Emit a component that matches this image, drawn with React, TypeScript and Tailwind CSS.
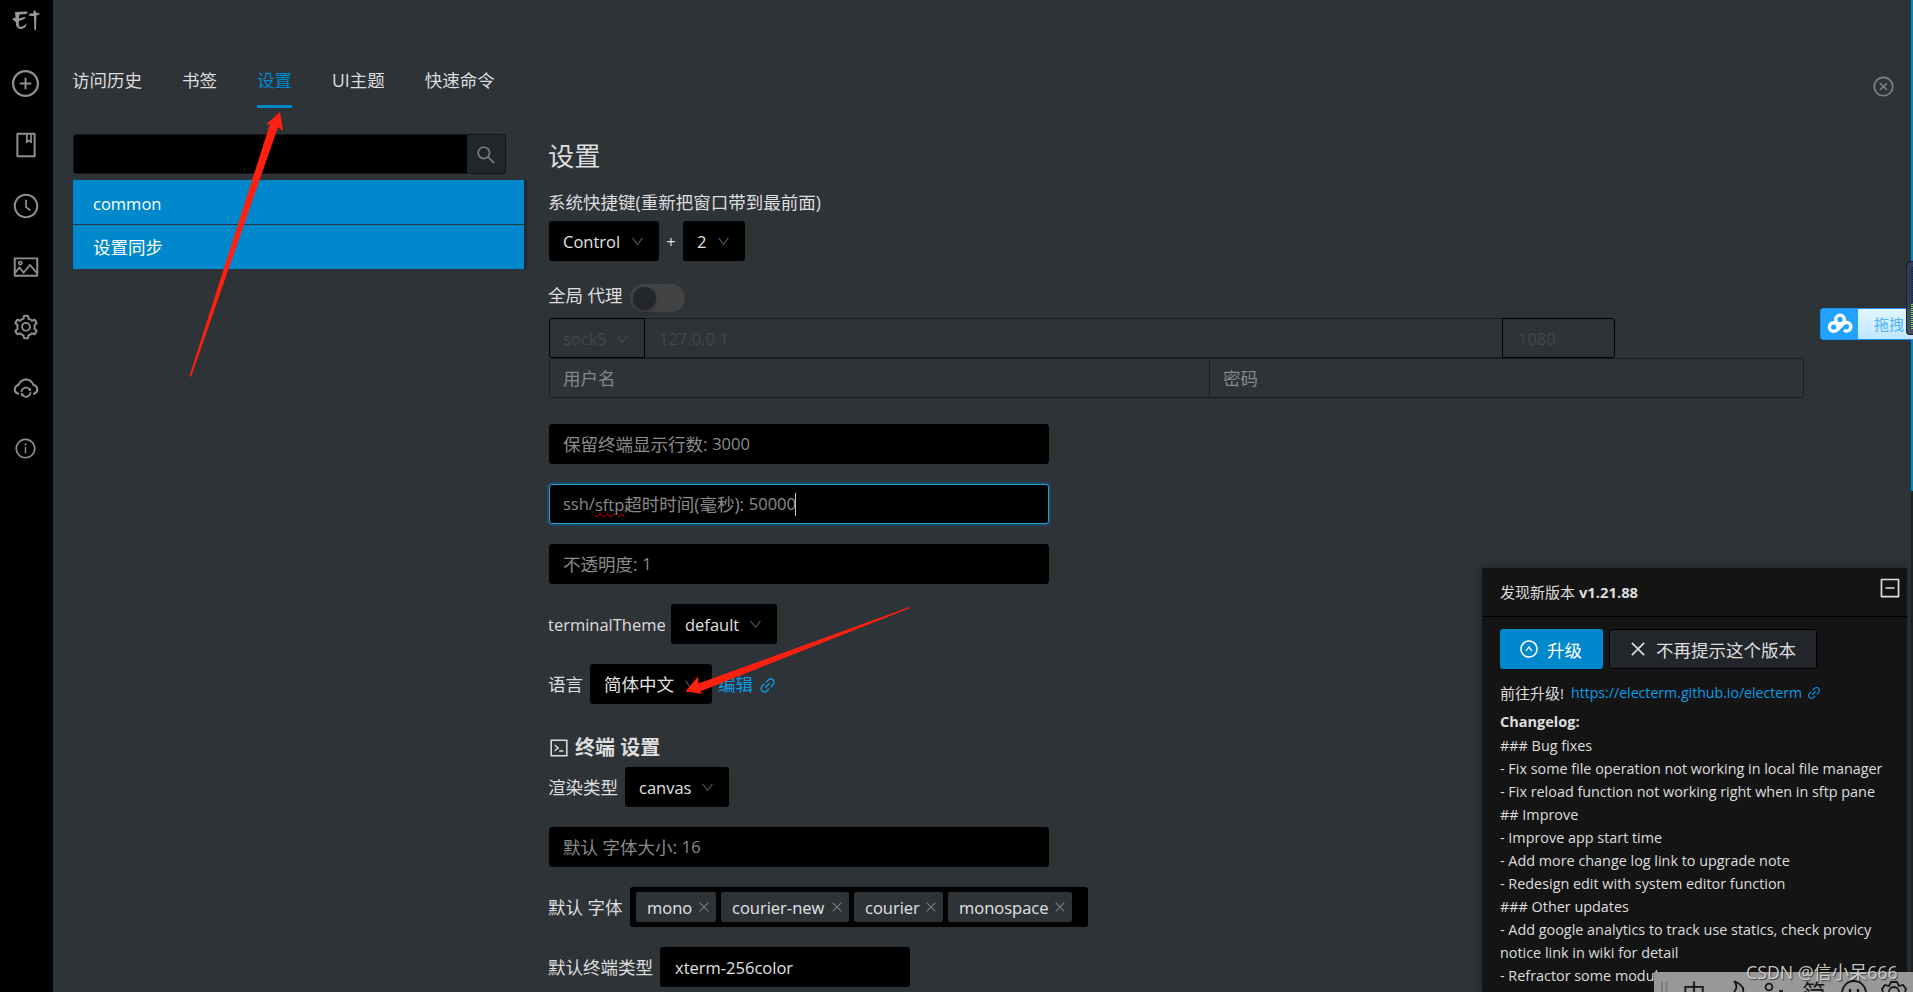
import type { ReactNode } from 'react'
import {
  AiOutlineBook,
  AiOutlineClockCircle,
  AiOutlineClose,
  AiOutlineCloseCircle,
  AiOutlineCloudSync,
  AiOutlineCode,
  AiOutlineDown,
  AiOutlineInfoCircle,
  AiOutlineLink,
  AiOutlineMinusSquare,
  AiOutlinePicture,
  AiOutlinePlusCircle,
  AiOutlineSearch,
  AiOutlineSetting,
  AiOutlineUpCircle,
} from 'react-icons/ai'

const changelog = [
  '### Bug fixes',
  '- Fix some file operation not working in local file manager',
  '- Fix reload function not working right when in sftp pane',
  '## Improve',
  '- Improve app start time',
  '- Add more change log link to upgrade note',
  '- Redesign edit with system editor function',
  '### Other updates',
  '- Add google analytics to track use statics, check provicy',
  'notice link in wiki for detail',
  '- Refractor some modules',
]

const tabs = ['访问历史', '书签', '设置', 'UI主题', '快速命令']

const fonts = [
  { name: 'mono', width: 'w-[80px]' },
  { name: 'courier-new', width: 'w-[128px]' },
  { name: 'courier', width: 'w-[89px]' },
  { name: 'monospace', width: 'w-[124px]' },
]

// latin text sits slightly smaller than the CJK text around it
function Latin({ children }: { children: ReactNode }) {
  return <span className="text-[0.943em]">{children}</span>
}

function Logo() {
  return (
    <svg width="28" height="22" viewBox="0 0 28 22" fill="#999">
      <path d="M3 2 L14.5 1.6 L16 2.6 L14 4 L7.5 4.6 L6.8 8.4 L13.5 6.8 L12.5 9 L7 11 Q6 16.5 8.5 17 Q11.5 17 14.5 13.6 Q14.5 18 9.5 19 Q3.6 19.4 3.8 12 L0 9 L3.6 7.4 Z" />
      <path d="M21.4 1.4 L23 0 L24.3 3 L27.5 3 L27.2 4.6 L24.4 5.4 L24 20.5 L22.3 19.5 L22 6.2 L16.6 5.4 L17.5 3.4 L21.2 3.4 Z" />
    </svg>
  )
}

function Sidebar() {
  return (
    <aside className="flex w-[53px] shrink-0 flex-col items-center bg-black pr-[2px] text-[#8f8f8f]">
      <div className="flex h-[53px] items-start pt-[10px]">
        <Logo />
      </div>
      <div className="flex h-[61px] items-center"><AiOutlinePlusCircle size={31} /></div>
      <div className="flex h-[62px] items-center"><AiOutlineBook size={28} /></div>
      <div className="flex h-[60px] items-center"><AiOutlineClockCircle size={28} /></div>
      <div className="flex h-[61px] items-center"><AiOutlinePicture size={28} /></div>
      <div className="flex h-[60px] items-center"><AiOutlineSetting size={28} /></div>
      <div className="flex h-[62px] items-center"><AiOutlineCloudSync size={28} /></div>
      <div className="flex h-[59px] items-center"><AiOutlineInfoCircle size={23} /></div>
    </aside>
  )
}

function Select({ width, children }: { width: string; children: ReactNode }) {
  return (
    <div className={`flex h-10 items-center justify-between rounded-[3px] bg-black pr-[14px] pl-[14px] text-[#e2e2e2] ${width}`}>
      <span className="pt-[2px]">{children}</span>
      <AiOutlineDown size={15} className="text-[#4d4d4d]" />
    </div>
  )
}

function TextInput({ focused, children }: { focused?: boolean; children: ReactNode }) {
  return (
    <div
      className={`flex h-10 w-[500px] items-center rounded-[3px] border bg-black pt-px pl-[13px] text-[#8b8b8b] ${
        focused ? 'border-[#20a0d8] shadow-[0_0_0_2px_rgba(0,136,204,0.25)]' : 'border-black'
      }`}
    >
      {children}
    </div>
  )
}

function SettingList() {
  return (
    <div className="w-[476px] shrink-0">
      <div className="flex h-10 w-[433px] rounded-[3px] border border-[#141618] bg-black">
        <div className="flex-1" />
        <div className="flex w-[38px] items-center justify-center rounded-r-[2px] bg-[#22262b] pt-px text-[#7b7b7b]">
          <AiOutlineSearch size={22} />
        </div>
      </div>
      <div className="mt-[6px] flex h-[90px] w-[454px] bg-[#222629]">
        <div className="flex w-[451px] flex-col gap-px bg-[#2e3338] text-white">
          <div className="flex h-11 items-center bg-[#0088cc] pt-[5px] pl-5"><Latin>common</Latin></div>
          <div className="flex h-11 items-center bg-[#0088cc] pt-[2px] pl-5">设置同步</div>
        </div>
      </div>
    </div>
  )
}

function SettingForm() {
  return (
    <div className="w-[1256px]">
      <h2 className="-ml-px flex h-[44px] items-center text-[26.25px]">设置</h2>
      <div className="mt-[11px] -ml-px flex h-[27px] items-center">系统快捷键(重新把窗口带到最前面)</div>
      <div className="mt-[5px] flex items-center">
        <Select width="w-[110px]"><Latin>Control</Latin></Select>
        <span className="w-6 pt-[2px] text-center"><Latin>+</Latin></span>
        <Select width="w-[62px]"><Latin>2</Latin></Select>
      </div>
      <div className="mt-[21px] flex h-[30px] items-center">
        <span className="-ml-px w-[82px] pb-[3px]">全局 代理</span>
        <div className="mt-[2px] h-7 w-[55px] rounded-full bg-[#434343] p-[2.5px]">
          <div className="h-[23px] w-[23px] rounded-full bg-[#23272b] shadow-[0_2px_4px_rgba(0,0,0,0.2)]" />
        </div>
      </div>

      <div className="mt-[6px] flex h-10 w-[1066px] text-[#43474a]">
        <div className="flex w-[96px] items-center justify-between rounded-l-[3px] border border-black pt-[2px] pr-3.5 pl-[13px]">
          <Latin>sock5</Latin>
          <AiOutlineDown size={15} />
        </div>
        <div className="flex flex-1 items-center border-y border-[#1b1e20] pt-[2px] pl-[14px]"><Latin>127.0.0.1</Latin></div>
        <div className="flex w-[113px] items-center rounded-r-[3px] border border-black pt-[2px] pl-[15px]"><Latin>1080</Latin></div>
      </div>
      <div className="flex h-10 w-[1255px] rounded-[3px] border border-[#1b1e20] text-[#85888a]">
        <div className="flex w-[660px] items-center border-r border-[#1b1e20] pt-px pl-[13px]">用户名</div>
        <div className="flex flex-1 items-center pt-px pl-[13px]">密码</div>
      </div>

      <div className="mt-[26px] flex flex-col gap-5">
        <TextInput>保留终端显示行数:&nbsp;<Latin>3000</Latin></TextInput>
        <TextInput focused>
          <Latin>ssh/</Latin>
          <span className="underline decoration-[#f00000] decoration-wavy decoration-1 underline-offset-2"><Latin>sftp</Latin></span>
          超时时间(毫秒):&nbsp;<Latin>50000</Latin>
          <span className="-ml-px h-[23px] w-px bg-[#c8c8c8]" />
        </TextInput>
        <TextInput>不透明度:&nbsp;<Latin>1</Latin></TextInput>
        <div className="flex items-center">
          <span className="-ml-px w-[123px] pt-[2px]"><Latin>terminalTheme</Latin></span>
          <Select width="w-[106px]"><Latin>default</Latin></Select>
        </div>
        <div className="flex items-center">
          <span className="-ml-px w-[42px] pt-[2px]">语言</span>
          <Select width="w-[122px]">简体中文</Select>
          <span className="ml-[6px] flex items-center gap-[5px] pt-[2px] text-[#0a9dea]">
            编辑
            <AiOutlineLink size={19} />
          </span>
        </div>
      </div>

      <h3 className="mt-[30px] -ml-px flex h-[28px] items-center gap-[5px] text-[20px] font-bold">
        <AiOutlineCode size={22} />
        终端 设置
      </h3>
      <div className="mt-[5px] flex flex-col gap-5">
        <div className="flex items-center">
          <span className="-ml-px w-[77px] pt-[2px]">渲染类型</span>
          <Select width="w-[104px]"><Latin>canvas</Latin></Select>
        </div>
        <TextInput>默认 字体大小:&nbsp;<Latin>16</Latin></TextInput>
        <div className="flex items-center">
          <span className="-ml-px w-[82px] pt-[2px]">默认 字体</span>
          <div className="flex h-10 w-[458px] items-center gap-[5px] rounded-[3px] bg-black pl-[6px]">
            {fonts.map((font) => (
              <span
                key={font.name}
                className={`flex h-[30px] items-center justify-between rounded-[2px] bg-[#2e3338] pr-[5px] pl-[11px] text-[#e2e2e2] ${font.width}`}
              >
                <span className="pt-[2px]"><Latin>{font.name}</Latin></span>
                <AiOutlineClose size={14} className="text-[#7b7b7b]" />
              </span>
            ))}
          </div>
        </div>
        <div className="flex items-center">
          <span className="-ml-px w-[112px] pt-[2px]">默认终端类型</span>
          <div className="flex h-10 w-[250px] items-center rounded-[3px] bg-black pt-[2px] pl-[15px] text-[#e2e2e2]">
            <Latin>xterm-256color</Latin>
          </div>
        </div>
      </div>
    </div>
  )
}

function UpgradePanel() {
  return (
    <section className="absolute top-[568px] left-[1482px] h-[424px] w-[425px] bg-[#141414] text-[15px] shadow-[0_0_12px_rgba(0,0,0,0.35)]">
      <header className="flex h-[49px] items-center justify-between border-b border-black pr-[5px] pl-[18px]">
        <span>发现新版本 <b className="text-[14.8px]">v1.21.88</b></span>
        <AiOutlineMinusSquare size={24} className="mb-2" />
      </header>
      <div className="px-[18px] pt-3">
        <div className="flex gap-[6px] text-[17.5px]">
          <button className="flex h-10 w-[103px] items-center gap-[8px] rounded-[3px] bg-[#0088cc] pl-[19px] text-white">
            <AiOutlineUpCircle size={20} />
            <span className="pt-[3px]">升级</span>
          </button>
          <button className="flex h-10 w-[208px] items-center gap-[8px] rounded-[3px] border border-black bg-[#22262b] pl-[18px]">
            <AiOutlineClose size={20} />
            <span className="pt-[3px]">不再提示这个版本</span>
          </button>
        </div>
        <p className="mt-3 flex h-6 items-center">
          <span className="w-[71px]">前往升级!</span>
          <span className="flex items-center gap-[4px] text-[#0a9dea]">
            <Latin>https://electerm.github.io/electerm</Latin>
            <AiOutlineLink size={16} />
          </span>
        </p>
        <p className="mt-[5px] h-[24px] text-[14.5px] leading-[24px] font-bold">Changelog:</p>
        {changelog.map((line) => (
          <p key={line} className="h-[23px] text-[14.38px] leading-[23px] whitespace-nowrap">{line}</p>
        ))}
      </div>
    </section>
  )
}

function DragWidget() {
  return (
    <div className="absolute top-[308px] left-[1820px] flex h-8 w-[93px] rounded-l-[4px] border border-r-0 border-[#1a8cf0] bg-[#d4effe]">
      <div className="flex w-[37px] items-center justify-center bg-[#22a2ff]">
        <svg width="26" height="22" viewBox="0 0 26 22" fill="none" stroke="#fff" strokeWidth="3.4">
          <circle cx="13" cy="6.4" r="4.3" />
          <circle cx="6.7" cy="14" r="4.3" />
          <path d="M10 17 L16 11.2 A4.3 4.3 0 1 1 17 17.2" />
        </svg>
      </div>
      <div className="flex flex-1 items-center bg-linear-to-b from-[#e2f5ff] to-[#bfe7ff] pl-4 text-[15px] whitespace-nowrap text-[#4fb4fa]">拖拽</div>
    </div>
  )
}

function SpeedMeter() {
  return (
    <div className="absolute top-[261px] left-[1906px] flex h-[74px] w-[7px] justify-end rounded-l-[4px] border border-r-0 border-[#1c1f2b] bg-[#343b50]/90 py-1">
      <div className="flex w-[2px] flex-col justify-between">
        <div className="h-[37px] w-full bg-[repeating-linear-gradient(#1d4d6b_0_1px,#16202c_1px_2px)]" />
        <div className="h-[26px] w-full bg-[repeating-linear-gradient(#8fd07c_0_1px,#2c4b48_1px_2px)]" />
      </div>
    </div>
  )
}

function InputMethodBar() {
  return (
    <div className="absolute top-[972px] left-[1654px] h-5 w-[259px] overflow-hidden bg-[#989898]">
      <svg width="259" height="20" viewBox="0 0 259 20" fill="none" stroke="#161616" strokeWidth="1.8">
        <path d="M8 10V20M12.5 10V20" stroke="#747474" strokeWidth="1.6" />
        <path d="M80 9 Q91 14 89 20 M80 9 Q85 15 80 20" />
        <circle cx="115" cy="15" r="3.4" />
        <path d="M125 19h4" />
        <circle cx="200" cy="21" r="12" />
        <path d="M196 17v3M204 17v3" strokeWidth="2.4" />
        <path d="M229 20 L228 17 L231 13 L235 14 L237 10 H243 L245 14 L249 13 L252 17 L251 20" />
        <path d="M235 20 A5 5 0 0 1 245 20" />
      </svg>
      <span className="absolute top-[7px] left-[28px] text-[24px] leading-7 text-[#161616]">中</span>
      <span className="absolute top-[7px] left-[148px] text-[24px] leading-7 text-[#161616]">简</span>
    </div>
  )
}

// tapered pointers drawn over the page
function Arrows() {
  return (
    <svg className="pointer-events-none absolute inset-0" width="1913" height="992" fill="#ff2010">
      <path d="M280 112 L265.5 125 L270 124 L189.5 376 L191 377 L278 127 L283 131 Z" />
      <path d="M685.5 691.5 L698 676.5 L698.5 683.5 L909.5 607 L910 608 L700 691.5 L703.5 694 Z" />
    </svg>
  )
}

export default function App() {
  return (
    <div className="relative flex h-[992px] w-[1913px] overflow-hidden bg-[#2e3338] font-['Open_Sans','Noto_Sans_CJK_SC',sans-serif] text-[17.5px] leading-none text-[#dedede]">
      <Sidebar />
      <main className="flex-1 pl-5">
        <div className="flex h-[108px] w-[1818px] items-end justify-between border-b border-[#34393d]">
          <nav className="-ml-px flex gap-10">
            {tabs.map((tab) => (
              <div
                key={tab}
                className={`-mb-px flex h-[46px] items-start border-b-[3px] pt-[10px] ${
                  tab === '设置' ? 'border-[#0088cc] text-[#0088cc]' : 'border-transparent'
                }`}
              >
                {tab}
              </div>
            ))}
          </nav>
          <AiOutlineCloseCircle size={23} className="mr-[-4px] mb-[9px] text-[#7f8284]" />
        </div>
        <div className="flex pt-[26px]">
          <SettingList />
          <SettingForm />
        </div>
      </main>
      <div className="absolute top-0 right-0 h-[491px] w-[2px] bg-[#0088cc]" />
      <div className="absolute top-[491px] right-0 h-[501px] w-[2px] bg-[#1f2225]" />
      <UpgradePanel />
      <DragWidget />
      <SpeedMeter />
      <InputMethodBar />
      <div className="absolute top-[961px] left-[1746px] text-[17.8px] leading-[22px] whitespace-nowrap text-[#dcdcdc]/90 [text-shadow:1px_1px_1px_rgba(0,0,0,0.6)]">
        CSDN @信小呆666
      </div>
      <Arrows />
    </div>
  )
}
